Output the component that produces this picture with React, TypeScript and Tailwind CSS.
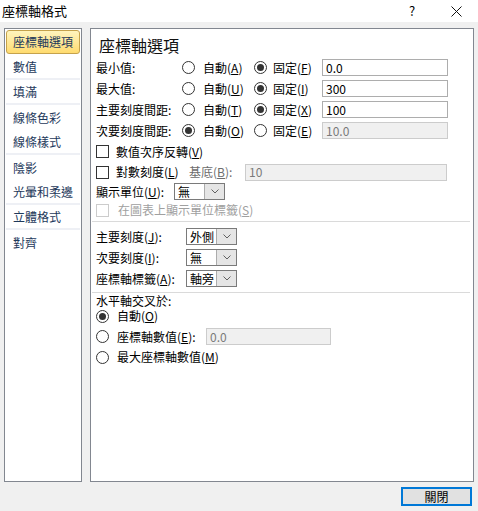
import type { ReactNode } from 'react';

const font = "font-['Noto_Sans_CJK_TC','Noto_Sans_CJK_JP',sans-serif]";

function Key({ k }: { k: string }) {
  return (
    <span>
      (<span className="underline underline-offset-1">{k}</span>)
    </span>
  );
}

function Radio({ checked }: { checked?: boolean }) {
  return (
    <span className="w-[13px] h-[13px] rounded-full border border-[#333] bg-white flex items-center justify-center shrink-0">
      {checked && <span className="w-[7px] h-[7px] rounded-full bg-[#333]" />}
    </span>
  );
}

function Check({ disabled }: { disabled?: boolean }) {
  return (
    <span
      className={
        'w-[13px] h-[13px] border bg-white shrink-0 ' +
        (disabled ? 'border-[#cccccc]' : 'border-[#333]')
      }
    />
  );
}

function Input({ value, disabled, w }: { value: string; disabled?: boolean; w: string }) {
  return (
    <div
      className={
        'h-[17px] border flex items-center pl-[3px] text-[12px] leading-none ' +
        w +
        (disabled
          ? ' border-[#cccccc] bg-[#f0f0f0] text-[#7a7a7a]'
          : ' border-[#adadad] bg-white text-black')
      }
    >
      {value}
    </div>
  );
}

function Select({ value }: { value: string }) {
  return (
    <div className="flex h-[17px] w-[51px] border border-[#7a7a7a] bg-white">
      <span className="flex-1 pl-[3px] text-[12px] leading-[15px]">{value}</span>
      <span className="w-[20px] border-l border-[#acacac] bg-[#e5e5e5] flex items-center justify-center">
        <svg width="8" height="5" viewBox="0 0 8 5">
          <path d="M0.5 0.5 L4 4 L7.5 0.5" fill="none" stroke="#606060" strokeWidth="1" />
        </svg>
      </span>
    </div>
  );
}

function ValueRow({
  label,
  autoKey,
  fixedKey,
  auto,
  value,
}: {
  label: string;
  autoKey: string;
  fixedKey: string;
  auto?: boolean;
  value: string;
}) {
  return (
    <div className="h-[21px] flex items-center">
      <span className="w-[86px] shrink-0">{label}</span>
      <div className="w-[72px] flex items-center shrink-0">
        <Radio checked={auto} />
        <span className="ml-[8px]">
          自動<Key k={autoKey} />
        </span>
      </div>
      <div className="w-[68px] flex items-center shrink-0">
        <Radio checked={!auto} />
        <span className="ml-[6px]">
          固定<Key k={fixedKey} />
        </span>
      </div>
      <Input value={value} disabled={auto} w="w-[126px]" />
    </div>
  );
}

function Row({ h, children }: { h: string; children: ReactNode }) {
  return <div className={'flex items-center ' + h}>{children}</div>;
}

const navItems: { text: string; sep?: boolean }[] = [
  { text: '座標軸選項' },
  { text: '數值', sep: true },
  { text: '填滿', sep: true },
  { text: '線條色彩' },
  { text: '線條樣式', sep: true },
  { text: '陰影' },
  { text: '光暈和柔邊', sep: true },
  { text: '立體格式', sep: true },
  { text: '對齊' },
];

export default function App() {
  return (
    <div className={'w-[478px] h-[511px] bg-[#f0f0f0] flex flex-col overflow-hidden text-[12px] text-black ' + font}>
      {/* title bar */}
      <div className="h-[22px] bg-white flex items-center shrink-0">
        <span className="pl-[2px] text-[13px] flex-1">座標軸格式</span>
        <span className="w-[44px] text-center text-[13px]">?</span>
        <span className="w-[44px] flex items-center justify-center">
          <svg width="11" height="11" viewBox="0 0 11 11">
            <path d="M0.5 0.5 L10.5 10.5 M10.5 0.5 L0.5 10.5" stroke="#111" strokeWidth="1" />
          </svg>
        </span>
      </div>

      <div className="flex gap-[8px] px-[4px] pt-[6px] h-[460px] shrink-0">
        {/* nav */}
        <div className="w-[78px] h-[454px] border border-[#828790] bg-white p-[1px]">
          {navItems.map((item, i) => (
            <div
              key={item.text}
              className={
                'h-[25px] text-[#1e395b] ' + (item.sep ? 'border-b-2 border-[#eef0f5]' : '')
              }
            >
              {i === 0 ? (
                <div className="h-[24px] rounded-[3px] border border-[#c5a24c] bg-linear-to-b from-[#fff4bd] to-[#ffdb6e] flex items-center pl-[6px]">
                  {item.text}
                </div>
              ) : (
                <div className="h-full flex items-center pl-[7px]">{item.text}</div>
              )}
            </div>
          ))}
        </div>

        {/* main panel */}
        <div className="w-[384px] h-[454px] border border-[#828790] bg-white pl-[5px] pr-[3px]">
          <div className="h-[28px] pt-[6px]">
            <div className="ml-[3px] text-[16px] leading-[20px] text-[#111]">座標軸選項</div>
          </div>

          <ValueRow label="最小值:" autoKey="A" fixedKey="F" value="0.0" />
          <ValueRow label="最大值:" autoKey="U" fixedKey="I" value="300" />
          <ValueRow label="主要刻度間距:" autoKey="T" fixedKey="X" value="100" />
          <ValueRow label="次要刻度間距:" autoKey="O" fixedKey="E" value="10.0" auto />

          <Row h="h-[21px]">
            <Check />
            <span className="ml-[7px]">
              數值次序反轉<Key k="V" />
            </span>
          </Row>
          <Row h="h-[20px]">
            <Check />
            <span className="ml-[7px] w-[73px]">
              對數刻度<Key k="L" />
            </span>
            <span className="text-[#6d6d6d] w-[56px]">
              基底<Key k="B" />:
            </span>
            <Input value="10" disabled w="w-[202px]" />
          </Row>
          <Row h="h-[19px]">
            <span className="w-[78px]">
              顯示單位<Key k="U" />:
            </span>
            <Select value="無" />
          </Row>
          <Row h="h-[18px]">
            <Check disabled />
            <span className="ml-[9px] text-[#a0a0a0]">
              在圖表上顯示單位標籤<Key k="S" />
            </span>
          </Row>

          <div className="mt-[2px] h-[1px] -ml-[4px] bg-[#dadada]" />

          <div className="mt-[4px]">
            <Row h="h-[21px]">
              <span className="w-[90px]">
                主要刻度<Key k="J" />:
              </span>
              <Select value="外側" />
            </Row>
            <Row h="h-[21px]">
              <span className="w-[90px]">
                次要刻度<Key k="I" />:
              </span>
              <Select value="無" />
            </Row>
            <Row h="h-[21px]">
              <span className="w-[90px]">
                座標軸標籤<Key k="A" />:
              </span>
              <Select value="軸旁" />
            </Row>
          </div>

          <div className="mt-[3px] h-[1px] -ml-[4px] bg-[#dadada]" />

          <Row h="h-[15px]">
            <span>水平軸交叉於:</span>
          </Row>
          <Row h="h-[16px]">
            <Radio checked />
            <span className="ml-[8px]">
              自動<Key k="O" />
            </span>
          </Row>
          <Row h="h-[25px]">
            <Radio />
            <span className="ml-[8px] w-[89px]">
              座標軸數值<Key k="E" />:
            </span>
            <Input value="0.0" disabled w="w-[125px]" />
          </Row>
          <Row h="h-[16px]">
            <Radio />
            <span className="ml-[8px]">
              最大座標軸數值<Key k="M" />
            </span>
          </Row>
        </div>
      </div>

      {/* footer */}
      <div className="flex justify-end pr-[6px] pt-[5px]">
        <button className="w-[71px] h-[19px] border-2 border-[#0078d7] bg-[#e1e1e1] text-[12px] leading-none flex items-center justify-center">
          關閉
        </button>
      </div>
    </div>
  );
}
